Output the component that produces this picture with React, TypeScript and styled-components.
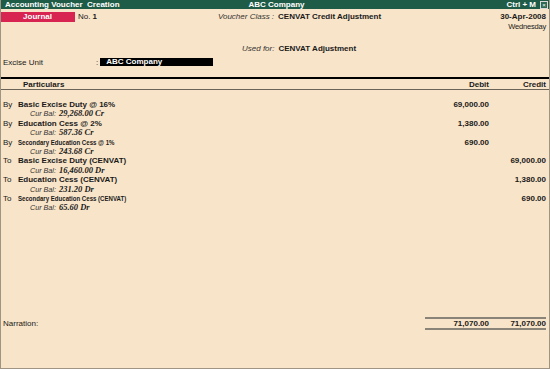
import React from 'react'
import styled, { createGlobalStyle } from 'styled-components'

const GlobalStyle = createGlobalStyle`
  html, body {
    margin: 0;
    padding: 0;
    background: #f8e4c8;
  }
`

const sans = `"Liberation Sans", Arial, sans-serif`

const Window = styled.div`
  width: 550px;
  height: 369px;
  box-sizing: border-box;
  display: flex;
  flex-direction: column;
  background: #f8e4c8;
  border-left: 1px solid #a09484;
  border-right: 1px solid #a09484;
  border-bottom: 1px solid #a09484;
  font-family: ${sans};
  font-size: 8px;
  color: #1a1a1a;
  overflow: hidden;
`

const TitleBar = styled.div`
  height: 9px;
  margin: 0 -1px;
  background: #1f5c48;
  color: #fff;
  font-weight: bold;
  font-size: 8px;
  line-height: 9px;
  display: grid;
  grid-template-columns: 1fr auto 1fr;
  padding: 0 2px 0 5px;
`

const TitleRight = styled.div`
  display: flex;
  justify-content: flex-end;
  align-items: center;
  gap: 4px;
`

const CloseBox = styled.span`
  width: 6px;
  height: 6px;
  border: 1px solid #d8d8d8;
  background: #2c6a55;
  font-size: 6px;
  line-height: 6px;
  text-align: center;
  font-weight: normal;
`

const HeadRow = styled.div`
  display: flex;
  align-items: flex-start;
  margin-top: 3px;
`

const VoucherType = styled.div`
  width: 75px;
  height: 10px;
  margin-left: -1px;
  background: #d72450;
  color: #fff;
  font-weight: bold;
  line-height: 10px;
  text-align: center;
`

const VoucherNo = styled.div`
  margin-left: 3px;
  line-height: 10px;
  b {
    margin-left: 2px;
  }
`

const ClassBlock = styled.div`
  margin-left: 121px;
  line-height: 10px;
  display: flex;
  gap: 4px;
`

const Label = styled.i`
  color: #333;
`

const DateBlock = styled.div`
  margin-left: auto;
  margin-right: 3px;
  text-align: right;
  line-height: 10px;
  span {
    display: block;
    font-size: 7.5px;
    letter-spacing: -0.2px;
  }
`

const UsedRow = styled.div`
  display: flex;
  gap: 4px;
  margin-top: 12px;
  padding-left: 241px;
  line-height: 10px;
`

const UnitRow = styled.div`
  display: flex;
  align-items: center;
  margin-top: 3px;
  padding-left: 2px;
  height: 10px;
`

const UnitLabel = styled.span`
  width: 93px;
`

const UnitValue = styled.span`
  margin-left: 2px;
  width: 107px;
  height: 8px;
  padding-left: 6px;
  background: #000;
  color: #fff;
  font-weight: bold;
  line-height: 8px;
`

const ColHead = styled.div`
  margin-top: 10px;
  padding-right: 3px;
  border-top: 2px solid #000;
  border-bottom: 1px solid #6b6258;
  display: flex;
  font-weight: bold;
  height: 10px;
  line-height: 11px;
`

const Amount = styled.span<{ $w: number }>`
  width: ${p => p.$w}px;
  text-align: right;
  flex-shrink: 0;
`

const Grow = styled.span<{ $pad?: number }>`
  flex: 1;
  padding-left: ${p => p.$pad ?? 0}px;
`

const Entries = styled.div`
  margin-top: 10px;
  display: flex;
  flex-direction: column;
`

const EntryRow = styled.div`
  display: flex;
  height: 9.4px;
  line-height: 9.4px;
  padding: 0 3px 0 2px;
`

const Side = styled.span`
  width: 15px;
`

const Ledger = styled.span`
  flex: 1;
  font-weight: bold;
`

// the "Secondary" ledgers are printed in a condensed face in the original
const NarrowText = styled.span`
  display: inline-block;
  font-weight: bold;
  transform: scaleX(0.76);
  transform-origin: left center;
  white-space: nowrap;
`

const BalRow = styled.div`
  height: 9.4px;
  line-height: 9.4px;
  padding-left: 29px;
  display: flex;
  gap: 3px;
  font-style: italic;
  font-size: 7.2px;
  color: #333;
  b {
    font-family: "Liberation Serif", "Times New Roman", serif;
    font-size: 8.5px;
    color: #1a1a1a;
  }
`

const Filler = styled.div`
  flex: 1;
`

const NarrationRow = styled.div`
  display: flex;
  align-items: center;
  padding: 0 3px 0 2px;
  margin-bottom: 38px;
`

const Totals = styled.div`
  margin-left: auto;
  width: 117px;
  height: 9px;
  border-top: 2px solid #8a8378;
  border-bottom: 2px solid #8a8378;
  padding-left: 4px;
  display: flex;
  justify-content: flex-end;
  font-weight: bold;
  line-height: 9px;
`

type Entry = {
  side: 'By' | 'To'
  ledger: string
  bal: string
  debit?: string
  credit?: string
  narrow?: boolean
}

const entries: Entry[] = [
  { side: 'By', ledger: 'Basic Excise Duty @ 16%', bal: '29,268.00 Cr', debit: '69,000.00' },
  { side: 'By', ledger: 'Education Cess @ 2%', bal: '587.36 Cr', debit: '1,380.00' },
  { side: 'By', ledger: 'Secondary Education Cess @ 1%', bal: '243.68 Cr', debit: '690.00', narrow: true },
  { side: 'To', ledger: 'Basic Excise Duty (CENVAT)', bal: '16,460.00 Dr', credit: '69,000.00' },
  { side: 'To', ledger: 'Education Cess (CENVAT)', bal: '231.20 Dr', credit: '1,380.00' },
  { side: 'To', ledger: 'Secondary Education Cess (CENVAT)', bal: '65.60 Dr', credit: '690.00', narrow: true },
]

const App: React.FC = () => {
  return (
    <>
      <GlobalStyle />
      <Window>
        <TitleBar>
          <span>Accounting Voucher&nbsp; Creation</span>
          <span>ABC Company</span>
          <TitleRight>
            <span>Ctrl + M</span>
            <CloseBox>×</CloseBox>
          </TitleRight>
        </TitleBar>

        <HeadRow>
          <VoucherType>Journal</VoucherType>
          <VoucherNo>
            No.<b>1</b>
          </VoucherNo>
          <ClassBlock>
            <Label>Voucher Class :</Label>
            <b>CENVAT Credit Adjustment</b>
          </ClassBlock>
          <DateBlock>
            <b>30-Apr-2008</b>
            <span>Wednesday</span>
          </DateBlock>
        </HeadRow>

        <UsedRow>
          <Label>Used for:</Label>
          <b>CENVAT Adjustment</b>
        </UsedRow>

        <UnitRow>
          <UnitLabel>Excise Unit</UnitLabel>
          <span>:</span>
          <UnitValue>ABC Company</UnitValue>
        </UnitRow>

        <ColHead>
          <Grow $pad={22}>Particulars</Grow>
          <Amount $w={60}>Debit</Amount>
          <Amount $w={57}>Credit</Amount>
        </ColHead>

        <Entries>
          {entries.map((e, i) => (
            <React.Fragment key={i}>
              <EntryRow>
                <Side>{e.side}</Side>
                <Ledger>{e.narrow ? <NarrowText>{e.ledger}</NarrowText> : e.ledger}</Ledger>
                <Amount $w={60}>
                  <b>{e.debit}</b>
                </Amount>
                <Amount $w={57}>
                  <b>{e.credit}</b>
                </Amount>
              </EntryRow>
              <BalRow>
                <span>Cur Bal:</span>
                <b>{e.bal}</b>
              </BalRow>
            </React.Fragment>
          ))}
        </Entries>

        <Filler />

        <NarrationRow>
          <span>Narration:</span>
          <Totals>
            <Amount $w={60}>71,070.00</Amount>
            <Amount $w={57}>71,070.00</Amount>
          </Totals>
        </NarrationRow>
      </Window>
    </>
  )
}

export default App
